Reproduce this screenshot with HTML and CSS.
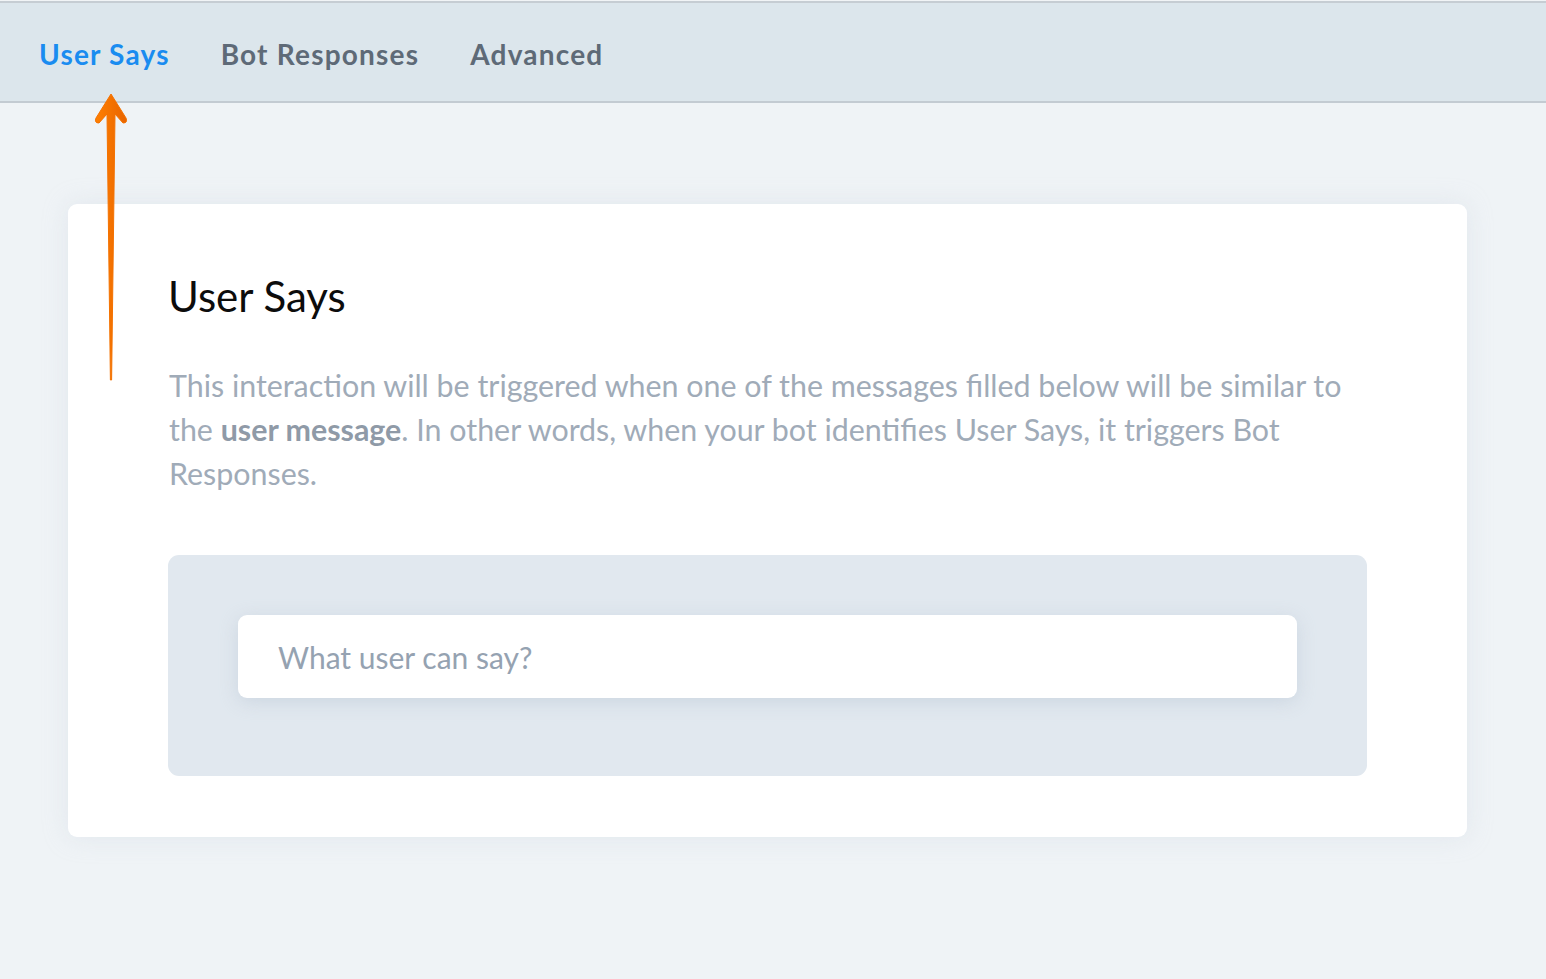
FILE: index.html
```html
<!DOCTYPE html>
<html>
<head>
<meta charset="utf-8">
<link rel="stylesheet" href="styles.css">
</head>
<body>
<div class="topline"></div>
<nav class="tabs">
  <a class="tab active">User Says</a>
  <a class="tab">Bot Responses</a>
  <a class="tab">Advanced</a>
</nav>
<main class="page">
  <section class="card">
    <h1 class="title">User Says</h1>
    <p class="desc">This interaction will be triggered when one of the messages filled below will be similar to the <b>user message</b>. In other words, when your bot identifies User Says, it triggers Bot Responses.</p>
    <div class="panel">
      <div class="input">What user can say?</div>
    </div>
  </section>
</main>
<svg class="arrow" width="60" height="300" viewBox="0 0 60 300">
  <defs>
    <linearGradient id="g" x1="0" x2="1" y1="0" y2="0">
      <stop offset="0" stop-color="#ff7f00"/>
      <stop offset="1" stop-color="#e86400"/>
    </linearGradient>
  </defs>
  <path d="M31 0 L46 24 Q48 29 43 29 L35 20 L31.6 286 L30.4 286 L27 20 L19 29 Q14 29 16 24 Z" fill="url(#g)" stroke="#f47200" stroke-width="1" stroke-linejoin="round"/>
</svg>
</body>
</html>
```
FILE: styles.css
```css
* { box-sizing: border-box; }
html, body { margin: 0; padding: 0; }
body {
  background: #eff3f6;
  font-family: "Source Sans Pro", Lato, "Noto Sans", sans-serif;
  width: 1546px;
  height: 979px;
  overflow: hidden;
  position: relative;
}
.topline {
  background: #f1f4f6;
  border-bottom: 2px solid #c6cdd3;
  height: 3px;
}
.tabs {
  display: flex;
  align-items: center;
  height: 100px;
  background: #dce6ec;
  border-bottom: 2px solid #c3cbd2;
  padding-left: 39px;
  gap: 51px;
}
.tab {
  font-size: 28px;
  font-weight: 700;
  letter-spacing: 1.2px;
  color: #5e6a77;
  padding-top: 4px;
}
.tab.active { color: #1a8cf0; }
.page {
  padding: 101px 0 0 68px;
}
.card {
  width: 1399px;
  height: 633px;
  background: #fff;
  border-radius: 9px;
  box-shadow: 0 0 24px rgba(200, 208, 220, 0.35);
  padding: 62px 100px 60px 100px;
}
.title {
  margin: 0;
  font-size: 42px;
  font-weight: 400;
  color: #0c0c0c;
  line-height: 60px;
}
.desc {
  margin: 37px 0 0;
  font-size: 30.4px;
  line-height: 44px;
  color: #a0abb8;
  padding-left: 1px;
}
.desc b { color: #8f9aa7; font-weight: 700; }
.panel {
  margin-top: 60px;
  background: #e1e8ef;
  border-radius: 11px;
  height: 221px;
  padding: 60px 70px 0;
}
.input {
  background: #fff;
  border-radius: 9px;
  height: 83px;
  box-shadow: 0 4px 18px rgba(180, 192, 208, 0.45);
  padding-left: 40px;
  padding-top: 1px;
  display: flex;
  align-items: center;
  font-size: 30px;
  color: #95a2b1;
}
.arrow {
  position: absolute;
  left: 80px;
  top: 94px;
}
```
